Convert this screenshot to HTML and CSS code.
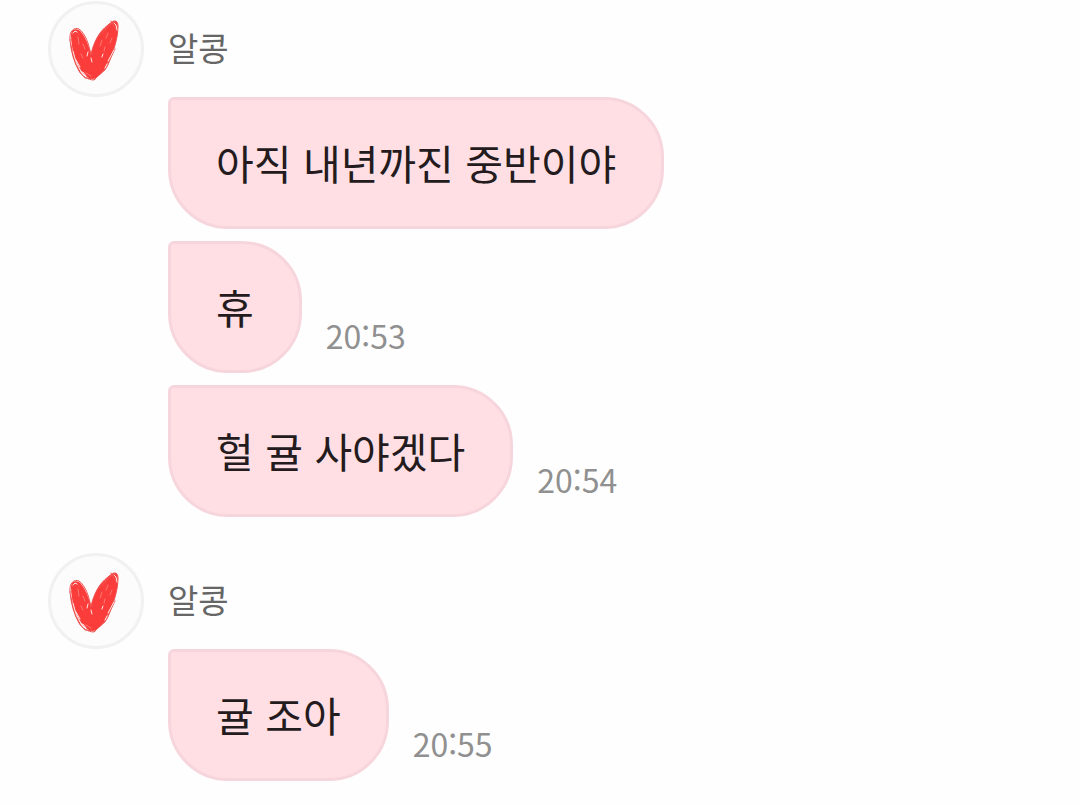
FILE: index.html
```html
<!DOCTYPE html>
<html lang="ko">

<head>
    <meta charset="UTF-8">
    <meta name="viewport" content="width=device-width, initial-scale=1.0">
    <title>알콩</title>
    <link rel="stylesheet" href="styles.css">
</head>

<body>
    <!-- heart drawing shared by the avatars -->
    <svg class="defs" width="0" height="0" aria-hidden="true">
        <symbol id="heart" viewBox="0 0 96 96">
            <path fill="#fa3d3b" d="M23 34 C23 29 27 27 31 29 C37 34 40 43 43 53 C45 43 50 32 58 26 C62 22 67 18 69 21 C71 26 70 36 66 47 C63 56 60 62 56 69 C52 74 49 77 45 78 C40 78 36 74 32 68 C27 60 23 46 23 34Z" />
            <g fill="none" stroke="#ee5552" stroke-width="1" stroke-linecap="round">
                <path d="M22 39 C21 30 26 26 31 28 C37 32 41 43 43 54 C45 43 51 30 60 24 C66 18 70 19 70 25 C70 34 67 46 64 53 C61 61 60 66 56 69 L46 79 C40 79 34 75 31 70 C26 61 23 51 22 39Z" />
                <path d="M24 34 C27 30 29 28 31 34 M23 44 C25 58 30 71 37 77 L47 78 M69 30 L63 20 M67 48 L57 69 L50 75 M51 35 L66 20 M24 49 L32 71" />
            </g>
            <g fill="none" stroke="#ffe6e3" stroke-width="1" stroke-linecap="round">
                <path d="M25 32 L27 30 L29 31 M66 22 L68 24 L69 29 M25 50 C27 59 30 66 34 72 M28 59 L32 66 M35 71 L38 75 M66 49 L60 60 M59 63 L57 67 M40 51 L39 55 M43 57 L44 61 M55 53 L54 56" />
            </g>
            <g fill="none" stroke="#fb7771" stroke-width="1" stroke-linecap="round">
                <path d="M30 36 L31 43 M35 43 L37 48 M33 53 L35 57 M54 39 L52 45 M60 32 L58 37 M64 37 L62 42 M57 46 L56 50 M38 72 L43 75" />
            </g>
        </symbol>
    </svg>

    <main class="chat">
        <section class="group">
            <header class="sender">
                <div class="avatar"><svg class="heart" role="img" aria-label="하트"><use href="#heart" /></svg></div>
                <div class="name">알콩</div>
            </header>
            <div class="messages">
                <div class="message">
                    <div class="bubble">아직 내년까진 중반이야</div>
                </div>
                <div class="message">
                    <div class="bubble">휴</div>
                    <time class="time">20:53</time>
                </div>
                <div class="message">
                    <div class="bubble">헐 귤 사야겠다</div>
                    <time class="time">20:54</time>
                </div>
            </div>
        </section>

        <section class="group">
            <header class="sender">
                <div class="avatar"><svg class="heart" role="img" aria-label="하트"><use href="#heart" /></svg></div>
                <div class="name">알콩</div>
            </header>
            <div class="messages">
                <div class="message">
                    <div class="bubble">귤 조아</div>
                    <time class="time">20:55</time>
                </div>
            </div>
        </section>
    </main>
</body>

</html>
```
FILE: styles.css
```css
body {
    margin: 0;
    background: #fefefe;
    font-family: "Noto Sans CJK KR", sans-serif;
}

.defs {
    display: block;
}

.chat {
    display: flex;
    flex-direction: column;
    gap: 36px;
    padding: 1px 48px 24px;
}

.sender {
    display: flex;
    align-items: center;
    gap: 24px;
}

.avatar {
    flex: none;
    width: 96px;
    height: 96px;
    box-sizing: border-box;
    border: 3px solid #f1f1f1;
    border-radius: 50%;
    background: #fcfcfc;
}

.heart {
    display: block;
    width: 96px;
    height: 96px;
    margin: -3px;
}

.name {
    padding-bottom: 4px;
    color: #666;
    font-size: 33px;
    line-height: 40px;
}

.messages {
    display: flex;
    flex-direction: column;
    gap: 12px;
    margin-left: 120px;
}

.message {
    display: flex;
    align-items: flex-end;
    gap: 24px;
}

.bubble {
    padding: 35px 45px 37px;
    border: 3px solid #f7d5dc;
    border-radius: 6px 60px 60px 60px;
    background: #ffdfe4;
    color: #231b1d;
    font-size: 41px;
    line-height: 54px;
}

.time {
    padding-bottom: 18px;
    color: #909090;
    font-size: 32px;
    line-height: 40px;
}
```
